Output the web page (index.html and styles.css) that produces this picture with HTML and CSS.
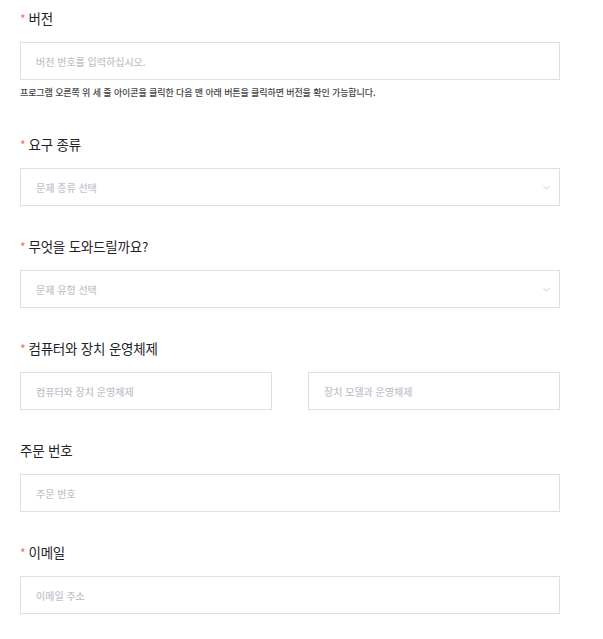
FILE: index.html
```html
<!DOCTYPE html>
<html lang="ko">
<head>
<meta charset="utf-8">
<link rel="stylesheet" href="styles.css">
</head>
<body>
<form class="form">
  <div class="item first">
    <label class="label"><span class="req">*</span>버전</label>
    <input class="input" type="text" placeholder="버전 번호를 입력하십시오.">
    <p class="help">프로그램 오른쪽 위 세 줄 아이콘을 클릭한 다음 맨 아래 버튼을 클릭하면 버전을 확인 가능합니다.</p>
  </div>
  <div class="item">
    <label class="label"><span class="req">*</span>요구 종류</label>
    <div class="select"><span class="ph">문제 종류 선택</span>
      <svg class="arrow" viewBox="0 0 10 10" width="9" height="9"><path d="M1.5 3.5 L5 6.8 L8.5 3.5" fill="none" stroke="#c0c4cc" stroke-width="1"/></svg>
    </div>
  </div>
  <div class="item">
    <label class="label"><span class="req">*</span>무엇을 도와드릴까요?</label>
    <div class="select"><span class="ph">문제 유형 선택</span>
      <svg class="arrow" viewBox="0 0 10 10" width="9" height="9"><path d="M1.5 3.5 L5 6.8 L8.5 3.5" fill="none" stroke="#c0c4cc" stroke-width="1"/></svg>
    </div>
  </div>
  <div class="item">
    <label class="label"><span class="req">*</span>컴퓨터와 장치 운영체제</label>
    <div class="row">
      <input class="input" type="text" placeholder="컴퓨터와 장치 운영체제">
      <input class="input" type="text" placeholder="장치 모델과 운영체제">
    </div>
  </div>
  <div class="item">
    <label class="label">주문 번호</label>
    <input class="input" type="text" placeholder="주문 번호">
  </div>
  <div class="item">
    <label class="label"><span class="req">*</span>이메일</label>
    <input class="input" type="text" placeholder="이메일 주소">
  </div>
</form>
</body>
</html>
```

FILE: styles.css
```css
* { box-sizing: border-box; }
html, body { margin: 0; padding: 0; background: #fff; }
body {
  font-family: "Noto Sans CJK KR", "Noto Sans", sans-serif;
  color: #1f2329;
}
.form {
  width: 540px;
  margin: 8px 0 0 20px;
}
.item { margin-bottom: 30px; }
.item.first { margin-bottom: 34px; }
.label {
  display: block;
  height: 20px;
  line-height: 20px;
  font-size: 13.5px;
  font-weight: 400;
  margin-bottom: 14px;
  letter-spacing: -0.2px;
}
.req {
  color: #f56c6c;
  margin-right: 3px;
  font-size: 12px;
  font-weight: 400;
}
.input, .select {
  display: flex;
  align-items: center;
  width: 100%;
  height: 38px;
  border: 1px solid #dcdfe6;
  border-radius: 0;
  padding: 0 15px;
  font-family: inherit;
  font-size: 10px;
  font-weight: 500;
  color: #333;
  background: #fff;
  outline: none;
}
.input::placeholder { color: #bfc3cb; }
.ph { color: #bfc3cb; flex: 1; }
.arrow { flex: none; margin-right: -7px; }
.row {
  display: grid;
  grid-template-columns: 252px 252px;
  column-gap: 36px;
}
.help {
  margin: 6px 0 0;
  font-size: 9px;
  font-weight: 500;
  line-height: 14px;
  color: #444;
  letter-spacing: -0.1px;
}
```
